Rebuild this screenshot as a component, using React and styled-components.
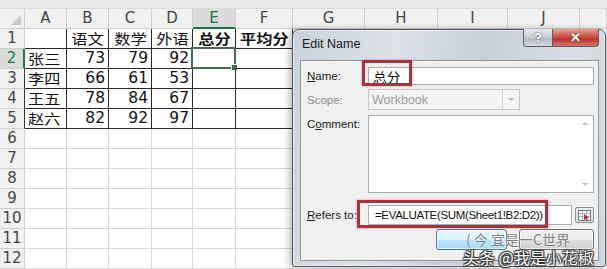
import React from "react";
import styled, { createGlobalStyle } from "styled-components";

const GlobalStyle = createGlobalStyle`
  html, body { margin: 0; padding: 0; background: #fff; }
  body { font-family: "Liberation Sans", Arial, sans-serif; }
`;

const COLS = ["A", "B", "C", "D", "E", "F", "G", "H", "I", "J", ""];
const WIDTHS = "25px 42px 42px 43px 41px 43px 57px 72px 73px 70px 72px 1fr";

const data = [
  ["", "语文", "数学", "外语", "总分", "平均分"],
  ["张三", 73, 79, 92, "", ""],
  ["李四", 66, 61, 53, "", ""],
  ["王五", 78, 84, 67, "", ""],
  ["赵六", 82, 92, 97, "", ""],
];

const Page = styled.div`
  position: relative;
  width: 607px;
  height: 269px;
  overflow: hidden;
  background: #fff;
`;

const TopStrip = styled.div`
  height: 9px;
  background: #e9e9e9;
  border-bottom: 1px solid #dadada;
  box-sizing: border-box;
`;

const Sheet = styled.div`
  display: grid;
  grid-template-columns: ${WIDTHS};
  grid-auto-rows: 20px;
`;

const Head = styled.div`
  display: flex;
  align-items: center;
  justify-content: center;
  line-height: 1;
  overflow: hidden;
  background: ${(p) => (p.$active ? "#d9dcd9" : "#f1f1f1")};
  color: ${(p) => (p.$active ? "#217346" : "#444")};
  font-family: "DejaVu Sans", sans-serif;
  font-size: 15px;
  box-sizing: border-box;
  border-right: 1px solid ${(p) => (p.$darkRight ? "#333" : "#cfcfcf")};
  border-bottom: 1px solid #cfcfcf;
  ${(p) => p.$activeBottom && "border-bottom: 2px solid #217346;"}
  ${(p) => p.$activeRight && "border-right: 2px solid #217346;"}
`;

const Corner = styled(Head)`
  position: relative;
  &::after {
    content: "";
    position: absolute;
    right: 3px;
    bottom: 3px;
    border-left: 10px solid transparent;
    border-bottom: 10px solid #c9c9c9;
  }
`;

const Cell = styled.div`
  position: relative;
  display: flex;
  align-items: center;
  justify-content: ${(p) => p.$align};
  padding: 0 3px;
  line-height: 1;
  box-sizing: border-box;
  font-family: "DejaVu Sans", "Noto Sans CJK SC", sans-serif;
  font-size: 15.5px;
  font-weight: ${(p) => (p.$bold ? 700 : 400)};
  color: #111;
  border-right: 1px solid ${(p) => (p.$dark ? "#2a2a2a" : "#d8d8d8")};
  border-bottom: 1px solid ${(p) => (p.$dark ? "#2a2a2a" : "#d8d8d8")};
`;

/* the screenshot is stretched sideways, so CJK text is widened a little */
const CjkText = styled.span`
  display: inline-block;
  font-family: "Noto Sans CJK SC", sans-serif;
  font-size: ${(p) => p.$size || 13.5}px;
  line-height: 1;
  transform: scaleX(${(p) => p.$stretch || 1.2});
  transform-origin: ${(p) => p.$origin || "center"};
`;

const Selection = styled.div`
  position: absolute;
  left: -2px;
  top: -2px;
  right: -1px;
  bottom: -1px;
  border: 2px solid #3f6e52;
  &::after {
    content: "";
    position: absolute;
    right: -4px;
    bottom: -4px;
    width: 5px;
    height: 5px;
    background: #3f6e52;
    border: 1px solid #fff;
  }
`;

/* ---------- dialog ---------- */

const Dialog = styled.div`
  position: absolute;
  left: 292px;
  top: 29px;
  width: 314px;
  height: 238px;
  box-sizing: border-box;
  border: 1px solid #4d5359;
  border-radius: 7px 7px 3px 3px;
  background: linear-gradient(100deg, #c9d1da 0%, #dde2e8 30%, #c6ced8 55%, #d9dee4 80%, #cfd6de 100%);
  box-shadow: -3px 0 6px rgba(0, 0, 0, 0.25), inset 0 0 0 1px rgba(255, 255, 255, 0.6);
  display: flex;
  flex-direction: column;
  padding: 0 6px 5px 7px;
`;

const TitleBar = styled.div`
  height: 30px;
  display: flex;
  align-items: flex-start;
  justify-content: space-between;
`;

const Title = styled.div`
  padding: 7px 0 0 2px;
  font-size: 12.5px;
  color: #1a1a1a;
`;

const Caption = styled.div`
  display: flex;
  margin-top: -1px;
`;

const CaptionBtn = styled.div`
  height: 18px;
  width: ${(p) => (p.$close ? "46px" : "30px")};
  display: flex;
  align-items: center;
  justify-content: center;
  box-sizing: border-box;
  border: 1px solid #5b6168;
  border-top: none;
  border-left: ${(p) => (p.$close ? "none" : "1px solid #5b6168")};
  border-radius: ${(p) => (p.$close ? "0 0 4px 0" : "0 0 0 4px")};
  background: ${(p) =>
    p.$close
      ? "linear-gradient(#e3a298, #c9473b 50%, #b8342a 60%, #d87a6c)"
      : "linear-gradient(#e6e9ee, #c6ccd4 50%, #b3bac4 60%, #d6dbe1)"};
  color: #fff;
  font-weight: 700;
  font-size: 13px;
  text-shadow: 0 0 2px #333;
`;

const Panel = styled.div`
  flex: 1;
  background: #f0f0f0;
  border: 1px solid #8f969e;
  box-sizing: border-box;
  padding: 6px 4px 0 6px;
  display: flex;
  flex-direction: column;
`;

const Row = styled.div`
  position: relative;
  display: flex;
  align-items: ${(p) => (p.$top ? "flex-start" : "center")};
  height: ${(p) => p.$h}px;
  margin-top: ${(p) => p.$mt || 0}px;
`;

const Label = styled.div`
  width: 61px;
  flex-shrink: 0;
  white-space: nowrap;
  font-size: 11.5px;
  color: ${(p) => (p.$disabled ? "#8d8d8d" : "#1a1a1a")};
  padding-top: ${(p) => (p.$top ? "3px" : 0)};
  u { text-decoration: underline; }
`;

const Input = styled.div`
  flex: ${(p) => (p.$w ? "none" : 1)};
  width: ${(p) => (p.$w ? `${p.$w}px` : "auto")};
  height: 100%;
  box-sizing: border-box;
  border: 1px solid #abadb3;
  background: #fff;
  display: flex;
  align-items: center;
  padding-left: 4px;
  font-size: 12px;
  color: #111;
`;

const Combo = styled.div`
  width: 152px;
  height: 100%;
  box-sizing: border-box;
  border: 1px solid #c6c6c6;
  background: #f4f4f4;
  display: flex;
  align-items: center;
  justify-content: space-between;
  padding-left: 3px;
  font-size: 12.5px;
  color: #9a9a9a;
`;

const ComboArrow = styled.div`
  width: 17px;
  height: 100%;
  box-sizing: border-box;
  border-left: 1px solid #cfcfcf;
  display: flex;
  align-items: center;
  justify-content: center;
  &::before {
    content: "";
    border-left: 3px solid transparent;
    border-right: 3px solid transparent;
    border-top: 3px solid #b5b5b5;
  }
`;

const TextArea = styled.div`
  flex: 1;
  height: 100%;
  box-sizing: border-box;
  border: 1px solid #abadb3;
  background: #fff;
  display: flex;
  justify-content: flex-end;
`;

const ScrollBar = styled.div`
  width: 17px;
  display: flex;
  flex-direction: column;
  justify-content: space-between;
  align-items: center;
  padding: 6px 0;
  box-sizing: border-box;
`;

const Arrow = styled.div`
  border-left: 3px solid transparent;
  border-right: 3px solid transparent;
  ${(p) => (p.$down ? "border-top: 3px solid #c0c0c0;" : "border-bottom: 3px solid #c0c0c0;")}
`;

const Formula = styled.span`
  font-size: 11.5px;
  letter-spacing: -0.35px;
  padding-left: 2px;
`;

const PickBtn = styled.div`
  width: 19px;
  height: 16px;
  margin-left: 3px;
  box-sizing: border-box;
  border: 1px solid #8e8f8f;
  border-radius: 2px;
  background: linear-gradient(#f4f4f4, #dcdcdc);
  display: flex;
  align-items: center;
  justify-content: center;
`;

const ButtonBar = styled.div`
  display: flex;
  justify-content: flex-end;
  gap: 12px;
  height: 21px;
  margin-top: 4px;
`;

const Button = styled.div`
  width: ${(p) => p.$w}px;
  box-sizing: border-box;
  border: 1px solid ${(p) => (p.$default ? "#3c7fb1" : "#707070")};
  border-radius: 3px;
  background: ${(p) =>
    p.$default
      ? "linear-gradient(#eaf6fd, #d9f0fc 50%, #bee6fd 51%, #a7d9f5)"
      : "linear-gradient(#f2f2f2, #ebebeb 50%, #dddddd 51%, #cfcfcf)"};
  box-shadow: inset 0 0 0 1px rgba(255, 255, 255, 0.7);
`;

const RedBox = styled.div`
  position: absolute;
  left: ${(p) => p.$l}px;
  top: ${(p) => p.$t}px;
  width: ${(p) => p.$w}px;
  height: ${(p) => p.$h}px;
  box-sizing: border-box;
  border: 3px solid #a93240;
  box-shadow: 0 0 2px rgba(169, 50, 64, 0.5);
  pointer-events: none;
`;

const Watermark = styled.div`
  position: absolute;
  left: ${(p) => p.$l}px;
  top: ${(p) => p.$t}px;
  font-family: "Noto Sans CJK SC", sans-serif;
  font-size: ${(p) => p.$size}px;
  line-height: 1;
  white-space: nowrap;
  color: ${(p) => (p.$faint ? "rgba(90,90,90,0.75)" : "#fff")};
  text-shadow: ${(p) =>
    p.$faint
      ? "0 0 2px #fff"
      : "0 0 1px #333, 1px 1px 1px #333, -1px -1px 1px #333, 1px -1px 1px #333, -1px 1px 1px #333"};
`;

function PickIcon() {
  return (
    <svg width="13" height="11" viewBox="0 0 13 11">
      <rect x="0.5" y="0.5" width="12" height="10" fill="#fff" stroke="#6d7a8a" />
      <path d="M1 3.5h11M1 6.5h11M4.5 1v9M8.5 1v9" stroke="#aab4c0" />
      <path d="M6 4l5 4-2 .5 1 2-1 .5-1-2-2 1z" fill="#a33" />
    </svg>
  );
}

export default function App() {
  return (
    <Page>
      <GlobalStyle />
      <TopStrip />
      <Sheet>
        <Corner />
        {COLS.map((c, i) => (
          <Head key={c + i} $active={c === "E"} $activeBottom={c === "E"}>
            {c}
          </Head>
        ))}
        {Array.from({ length: 12 }, (_, r) => {
          const row = data[r];
          const inTable = r < 5;
          return (
            <React.Fragment key={r}>
              <Head $active={r === 1} $activeRight={r === 1} $darkRight={inTable && r > 0}>
                {r + 1}
              </Head>
              {COLS.map((c, ci) => {
                const v = row && ci < 6 ? row[ci] : "";
                const isNum = typeof v === "number";
                const dark = inTable && ci < 6;
                return (
                  <Cell
                    key={ci}
                    $dark={dark}
                    $bold={r === 0 && ci >= 4}
                    $align={isNum ? "flex-end" : ci === 0 ? "flex-start" : "center"}
                  >
                    {isNum ? v : v ? <CjkText $origin={ci === 0 ? "left" : "center"}>{v}</CjkText> : null}
                    {r === 1 && ci === 4 && <Selection />}
                  </Cell>
                );
              })}
            </React.Fragment>
          );
        })}
      </Sheet>

      <Dialog>
        <TitleBar>
          <Title>Edit Name</Title>
          <Caption>
            <CaptionBtn>?</CaptionBtn>
            <CaptionBtn $close>✕</CaptionBtn>
          </Caption>
        </TitleBar>
        <Panel>
          <Row $h={18}>
            <Label>
              <u>N</u>ame:
            </Label>
            <Input>
              <CjkText $size={13} $stretch={1.05} $origin="left">总分</CjkText>
            </Input>
            <RedBox $l={55} $t={-7} $w={50} $h={26} />
          </Row>
          <Row $h={21} $mt={4}>
            <Label $disabled>Scope:</Label>
            <Combo>
              Workbook
              <ComboArrow />
            </Combo>
          </Row>
          <Row $h={78} $mt={5} $top>
            <Label $top>
              C<u>o</u>mment:
            </Label>
            <TextArea>
              <ScrollBar>
                <Arrow />
                <Arrow $down />
              </ScrollBar>
            </TextArea>
          </Row>
          <Row $h={20} $mt={12}>
            <Label>
              <u>R</u>efers to:
            </Label>
            <Input $w={204}>
              <Formula>=EVALUATE(SUM(Sheet1!B2:D2))</Formula>
            </Input>
            <PickBtn>
              <PickIcon />
            </PickBtn>
            <RedBox $l={50} $t={-5} $w={191} $h={28} />
          </Row>
          <ButtonBar>
            <Button $default $w={71} />
            <Button $w={75} />
          </ButtonBar>
        </Panel>
      </Dialog>

      <Watermark $faint $l={466} $t={232} $size={14}>
        ( 今  宜是一C世界
      </Watermark>
      <Watermark $l={463} $t={249} $size={16}>
        头条 @我是小花椒
      </Watermark>
    </Page>
  );
}
